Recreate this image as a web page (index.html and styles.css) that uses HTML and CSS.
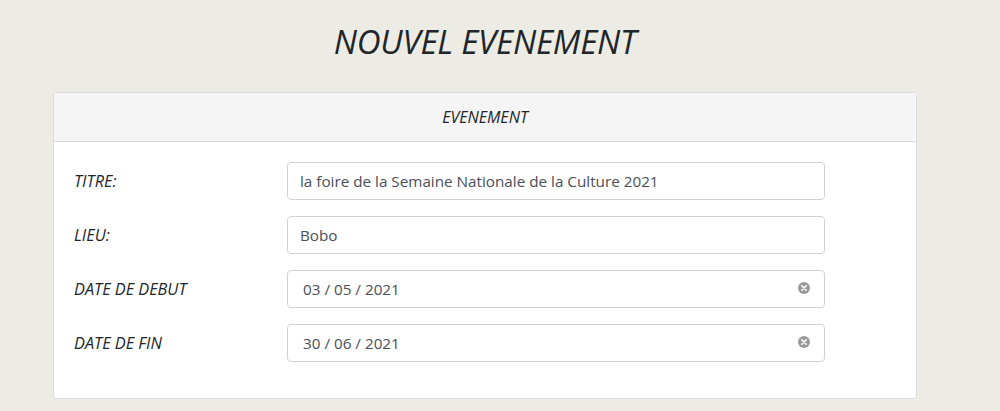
FILE: index.html
```html
<!DOCTYPE html>
<html lang="fr">
<head>
<meta charset="utf-8">
<link rel="stylesheet" href="styles.css">
</head>
<body>
<h1 class="title">NOUVEL EVENEMENT</h1>
<div class="card">
  <div class="card-header">EVENEMENT</div>
  <div class="card-body">
    <div class="row">
      <label class="label">TITRE:</label>
      <div class="input">la foire de la Semaine Nationale de la Culture 2021</div>
    </div>
    <div class="row">
      <label class="label">LIEU:</label>
      <div class="input">Bobo</div>
    </div>
    <div class="row">
      <label class="label">DATE DE DEBUT</label>
      <div class="input date"><span>03 / 05 / 2021</span><span class="clear"><svg width="12" height="12" viewBox="0 0 12 12"><circle cx="6" cy="6" r="6" fill="#9a9a9a"/><path d="M3.8 3.8 L8.2 8.2 M8.2 3.8 L3.8 8.2" stroke="#fff" stroke-width="1.6" stroke-linecap="round"/></svg></span></div>
    </div>
    <div class="row">
      <label class="label">DATE DE FIN</label>
      <div class="input date"><span>30 / 06 / 2021</span><span class="clear"><svg width="12" height="12" viewBox="0 0 12 12"><circle cx="6" cy="6" r="6" fill="#9a9a9a"/><path d="M3.8 3.8 L8.2 8.2 M8.2 3.8 L3.8 8.2" stroke="#fff" stroke-width="1.6" stroke-linecap="round"/></svg></span></div>
    </div>
  </div>
</div>
</body>
</html>
```

FILE: styles.css
```css
html, body {
  margin: 0;
  padding: 0;
}
body {
  background: #ecece5;
  font-family: "Open Sans", "Noto Sans", sans-serif;
  color: #212529;
  padding: 20px 0 0 53px;
  width: 864px;
}
.title {
  margin: 0 0 28px 0;
  text-align: center;
  font-weight: 400;
  font-style: italic;
  font-size: 33px;
  line-height: 44px;
  color: #212529;
  font-family: "Open Sans", sans-serif;
  letter-spacing: -0.2px;
}
.card {
  background: #fff;
  border: 1px solid #dcdcdc;
  border-radius: 3px;
  box-sizing: border-box;
  height: 307px;
}
.card-header {
  background: #f5f5f5;
  border-bottom: 1px solid #dcdcdc;
  height: 48px;
  display: flex;
  align-items: center;
  justify-content: center;
  font-style: italic;
  font-size: 16px;
  color: #212529;
}
.card-body {
  padding: 20px 91px 0 20px;
  display: flex;
  flex-direction: column;
  gap: 16px;
}
.row {
  display: grid;
  grid-template-columns: 213px 1fr;
  align-items: center;
}
.label {
  font-style: italic;
  font-size: 16.3px;
  color: #212529;
}
.input {
  height: 38px;
  box-sizing: border-box;
  border: 1px solid #cfd3d8;
  border-radius: 4px;
  padding: 0 12px;
  display: flex;
  align-items: center;
  font-size: 15.25px;
  color: #495057;
}
.date {
  padding-left: 15px;
  justify-content: space-between;
}
.clear {
  display: flex;
  margin-right: 2px;
  margin-top: -3px;
}
```
